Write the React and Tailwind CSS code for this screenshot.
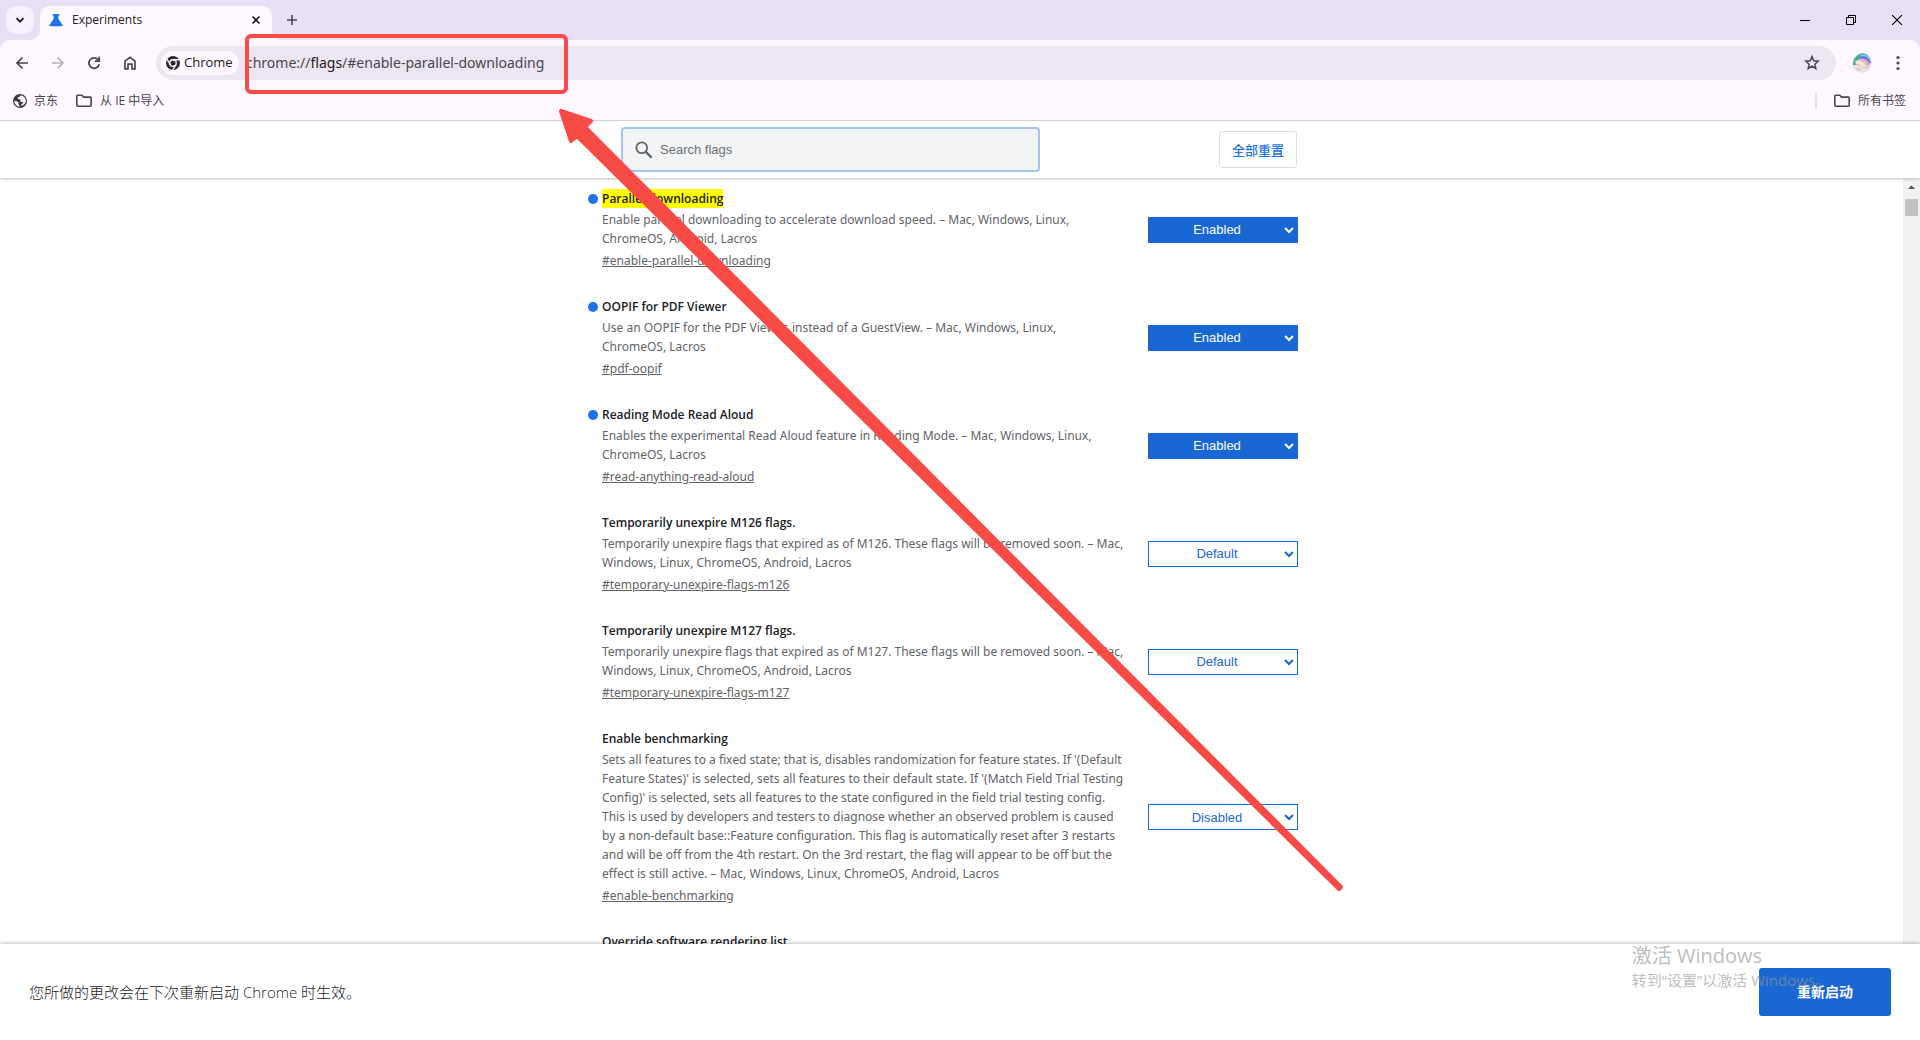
import React from "react";

const flags = [
  {
    title: "Parallel downloading",
    id: "enable-parallel-downloading",
    lines: ["Enable parallel downloading to accelerate download speed. – Mac, Windows, Linux,", "ChromeOS, Android, Lacros"],
    value: "Enabled",
    changed: true,
    marked: true,
  },
  {
    title: "OOPIF for PDF Viewer",
    id: "pdf-oopif",
    lines: ["Use an OOPIF for the PDF Viewer, instead of a GuestView. – Mac, Windows, Linux,", "ChromeOS, Lacros"],
    value: "Enabled",
    changed: true,
  },
  {
    title: "Reading Mode Read Aloud",
    id: "read-anything-read-aloud",
    lines: ["Enables the experimental Read Aloud feature in Reading Mode. – Mac, Windows, Linux,", "ChromeOS, Lacros"],
    value: "Enabled",
    changed: true,
  },
  {
    title: "Temporarily unexpire M126 flags.",
    id: "temporary-unexpire-flags-m126",
    lines: ["Temporarily unexpire flags that expired as of M126. These flags will be removed soon. – Mac,", "Windows, Linux, ChromeOS, Android, Lacros"],
    value: "Default",
  },
  {
    title: "Temporarily unexpire M127 flags.",
    id: "temporary-unexpire-flags-m127",
    lines: ["Temporarily unexpire flags that expired as of M127. These flags will be removed soon. – Mac,", "Windows, Linux, ChromeOS, Android, Lacros"],
    value: "Default",
  },
  {
    title: "Enable benchmarking",
    id: "enable-benchmarking",
    lines: [
      "Sets all features to a fixed state; that is, disables randomization for feature states. If '(Default",
      "Feature States)' is selected, sets all features to their default state. If '(Match Field Trial Testing",
      "Config)' is selected, sets all features to the state configured in the field trial testing config.",
      "This is used by developers and testers to diagnose whether an observed problem is caused",
      "by a non-default base::Feature configuration. This flag is automatically reset after 3 restarts",
      "and will be off from the 4th restart. On the 3rd restart, the flag will appear to be off but the",
      "effect is still active. – Mac, Windows, Linux, ChromeOS, Android, Lacros",
    ],
    value: "Disabled",
  },
];

const nextFlag = "Override software rendering list";

function Svg({ size = 20, box = 20, className = "", children }) {
  return (
    <svg width={size} height={size} viewBox={`0 0 ${box} ${box}`} className={`shrink-0 ${className}`} fill="none" stroke="currentColor" strokeWidth="2" aria-hidden="true">
      {children}
    </svg>
  );
}

function FolderIcon() {
  return (
    <Svg size={18} box={18} className="text-[#49454e]">
      <path d="M1.8 4.2a1 1 0 0 1 1-1h4l1.8 1.9h6.6a1 1 0 0 1 1 1v7.2a1 1 0 0 1-1 1H2.8a1 1 0 0 1-1-1z" strokeWidth="1.6" />
    </Svg>
  );
}

function IconButton({ label, className = "", children }) {
  return (
    <button type="button" aria-label={label} className={`flex h-9 w-9 items-center justify-center ${className}`}>
      {children}
    </button>
  );
}

function TabStrip() {
  return (
    <div className="flex h-10 bg-[#e8def5] pl-1.5">
      <button type="button" aria-label="Search tabs" className="mt-1.5 flex h-7 w-7 items-center justify-center rounded-[10px] bg-[#f7f0fd] text-[#1d1b20]">
        <Svg size={10} box={10}><path d="M1.5 3.2 5 6.7l3.5-3.5" strokeWidth="1.8" /></Svg>
      </button>
      <div className="relative ml-1.5 mt-1.5 flex w-[232px] items-center rounded-t-[10px] bg-[#fef7ff] pb-1.5 pl-2 pr-2">
        <svg className="absolute -left-2.5 bottom-0" width="10" height="10" aria-hidden="true"><path d="M10 0v10H0A10 10 0 0 0 10 0z" fill="#fef7ff" /></svg>
        <svg className="absolute -right-2.5 bottom-0" width="10" height="10" aria-hidden="true"><path d="M0 0v10h10A10 10 0 0 1 0 0z" fill="#fef7ff" /></svg>
        <svg width="16" height="16" viewBox="0 0 16 16" fill="#1a73e8" aria-hidden="true">
          <path d="M4.6 2h6.8v1.6h-1V7l4 5.8c.5.8 0 1.4-.8 1.4H2.400c-.8 0-1.300-.6-.8-1.400L5.600 7V3.600h-1z" />
        </svg>
        <span className="ml-2 flex-1 text-xs leading-4 text-[#1d1b20]">Experiments</span>
        <button type="button" aria-label="Close tab" className="flex h-4 w-4 items-center justify-center text-[#1d1b20]">
          <Svg size={10} box={10}><path d="m1.500 1.500 7 7m0-7-7 7" strokeWidth="1.600" /></Svg>
        </button>
      </div>
      <button type="button" aria-label="New tab" className="ml-1.5 mt-1.5 flex h-7 w-7 items-center justify-center text-[#49454e]">
        <Svg size={12} box={12}><path d="M6 1v10M1 6h10" strokeWidth="1.600" /></Svg>
      </button>
      <div className="ml-auto flex text-black">
        <button type="button" aria-label="Minimize" className="flex w-[46px] items-center justify-center"><Svg size={10} box={10}><path d="M0 5.500h10" strokeWidth="1" /></Svg></button>
        <button type="button" aria-label="Restore" className="flex w-[46px] items-center justify-center"><Svg size={10} box={10}><path d="M.5 2.500h7v7h-7zM2.500 2V.500h7v7H8" strokeWidth="1" /></Svg></button>
        <button type="button" aria-label="Close" className="flex w-[46px] items-center justify-center"><Svg size={10} box={10}><path d="m0 0 10 10M10 0 0 10" strokeWidth="1.200" /></Svg></button>
      </div>
    </div>
  );
}

function Toolbar() {
  return (
    <div className="bg-[#e8def5]">
      <div className="flex h-[46px] items-center rounded-t-[10px] bg-[#fef7ff] pl-1 pr-1">
        <div className="flex text-[#49454e]">
          <IconButton label="Back"><Svg><path d="M16 10H5m5.500-5.500L5 10l5.500 5.500" strokeWidth="1.700" /></Svg></IconButton>
          <IconButton label="Forward" className="text-[#b5b0b9]"><Svg><path d="M4 10h11M9.500 4.500 15 10l-5.500 5.500" strokeWidth="1.700" /></Svg></IconButton>
          <IconButton label="Reload"><Svg><path d="M14.300 7A5.200 5.200 0 1 0 15.200 11.200" strokeWidth="1.800" /><path d="M15.200 3.800v4.400h-4.400" strokeWidth="1.800" /></Svg></IconButton>
          <IconButton label="Home"><Svg><path d="M5 8.200 10 4.300l5 3.900v7.600h-3v-4.600H8v4.600H5z" strokeWidth="1.700" /></Svg></IconButton>
        </div>
        <div className="ml-2 flex h-[34px] flex-1 items-center rounded-full bg-[#ece6f0] pl-[5px]">
          <button type="button" className="flex h-6 w-[78px] items-center gap-1 rounded-full bg-[#fef7ff] pl-[5px] text-[13px] text-[#1d1b20]">
            <svg width="14" height="14" viewBox="0 0 16 16" className="shrink-0" aria-hidden="true">
              <circle cx="8" cy="8" r="8" fill="#2d2a31" />
              <circle cx="8" cy="8" r="3.700" fill="none" stroke="#fef7ff" strokeWidth="1.500" />
              <path d="M8 4.300h7.200M4.800 9.900 1.200 3.700M11.200 9.900 7.600 16" stroke="#fef7ff" strokeWidth="1.500" />
            </svg>
            Chrome
          </button>
          <div className="ml-[7px] flex-1 font-['Noto_Sans',sans-serif] text-sm text-[#49454e]">
            chrome://<span className="text-[#1d1b20]">flags</span>/#enable-parallel-downloading
          </div>
          <button type="button" aria-label="Bookmark this tab" className="mr-3.5 text-[#49454e]">
            <Svg><path d="m10 3.600 1.700 4.200 4.500.4-3.400 3 1 4.400L10 13.200l-3.800 2.400 1-4.400-3.400-3 4.500-.4z" strokeWidth="1.500" /></Svg>
          </button>
        </div>
        <button type="button" aria-label="Profile" className="ml-4 mr-2">
          <svg width="20" height="20" viewBox="0 0 20 20" className="rounded-full" aria-hidden="true">
            <circle cx="10" cy="10" r="10" fill="#e3e2e4" />
            <path d="M1 12C1 6 5 1 10 0c3 0 5 1 7 3-4-1-8 0-10 3-2 2-3 4-3 6z" fill="#35b58f" />
            <path d="M8 2c5-2 9 0 11 5l-2 1C15 5 11 4 8 4z" fill="#7fc4e8" />
            <path d="M7 4c5-2 10 0 12 6l-3 1C14 7 11 5 7 6z" fill="#6a70e0" />
            <path d="M9 6c4-1 8 2 9 6l-3 1c-1-4-3-5-6-5z" fill="#e6a9c8" />
            <path d="m3 8 3-1 4 1 4 4 2 1-1 2-3-1-5 3-2-1 3-3-2-2-2 1z" fill="#f3e7d8" stroke="#a89c97" strokeWidth=".5" />
          </svg>
        </button>
        <IconButton label="Menu" className="text-[#49454e]">
          <svg width="20" height="20" viewBox="0 0 20 20" fill="currentColor" aria-hidden="true"><circle cx="10" cy="4.500" r="1.600" /><circle cx="10" cy="10" r="1.600" /><circle cx="10" cy="15.500" r="1.600" /></svg>
        </IconButton>
      </div>
    </div>
  );
}

function BookmarksBar() {
  return (
    <div className="flex h-[35px] items-start border-b border-[#e0d9e6] bg-[#fef7ff] pl-[13px] pr-3.5 text-xs text-[#49454e]">
      <div className="flex h-[30px] flex-1 items-center">
        <a href="#jd" className="flex items-center gap-[7px]">
          <svg width="14" height="14" viewBox="0 0 16 16" aria-hidden="true">
            <circle cx="8" cy="8" r="8" fill="#3d3a41" />
            <path d="M8.500 1.600c-.3 1.300-1.500 1.500-2.600 2C4.700 4.200 5.500 5.700 7 5.900c1.500.3 2.200 1.100 1.500 2.300-.5.9.7 1 1.600.8 1.500-.3 2 .8 1 1.700-1 1-1.700 1.200-1.900 2.600 3-.2 5.300-2.300 5.500-5.500.1-3.100-2.600-6.200-6.200-6.200zM1.600 7.300C2.800 8.400 4.700 8 5.700 9.100c.9 1 .2 1.700.7 2.700.4.900 1 .9 1 2.500C4 14.200 1.400 11.300 1.600 7.300z" fill="#fef7ff" />
          </svg>
          京东
        </a>
        <a href="#imported" className="ml-[17px] flex items-center gap-[7px]">
          <FolderIcon />
          从 IE 中导入
        </a>
      </div>
      <div className="flex h-[30px] items-center">
        <span className="mr-4 h-4 w-0.5 bg-[#e8def8]" />
        <button type="button" className="flex items-center gap-[7px]">
          <FolderIcon />
          所有书签
        </button>
      </div>
    </div>
  );
}

function SearchHeader() {
  return (
    <header className="relative z-10 h-[57px] bg-white pr-[17px] shadow-[0_1px_3px_rgba(0,0,0,0.25)]">
      <div className="mx-auto flex h-full w-[727px] items-center pl-[33px] pr-[18px]">
        <label className="flex h-[45px] w-[419px] items-center rounded-[4px] border-2 border-[#a0c3fb] bg-[#f1f3f4] pl-3">
          <Svg size={18} box={20} className="text-[#5f6368]">
            <circle cx="7.500" cy="7.500" r="6" />
            <path d="m11.800 11.800 6.800 6.800" strokeWidth="2.600" />
          </Svg>
          <input type="text" aria-label="Search flags" placeholder="Search flags" className="ml-[7px] flex-1 bg-transparent font-['Liberation_Sans',sans-serif] text-[13px] outline-none placeholder:text-[#6b6f73]" />
        </label>
        <button type="button" className="ml-auto h-[37px] w-[78px] rounded-[3px] border border-[#dadce0] font-['Noto_Sans_CJK_SC',sans-serif] text-[13px] font-medium text-[#1a73e8]">全部重置</button>
      </div>
    </header>
  );
}

function FlagTitle({ changed, marked, children }) {
  return (
    <h3 className="flex items-center text-xs font-semibold leading-[19px] text-[#202124]">
      <span className={changed ? "mr-1 h-2.5 w-2.5 rounded-full bg-[#1a73e8]" : "mr-1 h-2.5 w-2.5"} />
      <span className={marked ? "bg-[#ffff00]" : ""}>{children}</span>
    </h3>
  );
}

function FlagRow({ flag }) {
  const enabled = flag.value === "Enabled";
  return (
    <li className="mb-[27px] flex items-center">
      <div className="w-[560px] shrink-0">
        <FlagTitle changed={flag.changed} marked={flag.marked}>{flag.title}</FlagTitle>
        <p className="mt-0.5 whitespace-nowrap pl-3.5 font-['Noto_Sans',sans-serif] text-xs leading-[19px] text-[#5f6368]">
          {flag.lines.map((line) => (
            <React.Fragment key={line}>{line}<br /></React.Fragment>
          ))}
        </p>
        <a href={`#${flag.id}`} className="ml-3.5 mt-[3px] block w-fit font-['Noto_Sans',sans-serif] text-xs leading-[19px] text-[#5f6368] underline">#{flag.id}</a>
      </div>
      <select
        aria-label={flag.title}
        defaultValue={flag.value}
        className={
          enabled
            ? "h-[26px] w-[150px] border border-[#1967d2] bg-[#1967d2] text-center font-['Liberation_Sans',sans-serif] text-[13px] text-white"
            : "h-[26px] w-[150px] border border-[#1967d2] bg-white text-center font-['Liberation_Sans',sans-serif] text-[13px] text-[#1967d2]"
        }
      >
        <option>Default</option>
        <option>Enabled</option>
        <option>Disabled</option>
      </select>
    </li>
  );
}

function Scrollbar() {
  return (
    <div className="flex w-[17px] shrink-0 flex-col items-center bg-[#f1f1f1]" aria-hidden="true">
      <svg width="17" height="21" viewBox="0 0 17 21"><path d="M5 11h7L8.500 7.500z" fill="#505050" /></svg>
      <div className="h-[17px] w-[13px] bg-[#c1c1c1]" />
    </div>
  );
}

function RestartBar() {
  return (
    <footer className="relative z-10 flex h-24 items-center justify-between bg-white pl-[29px] pr-[29px] shadow-[0_-1px_3px_rgba(0,0,0,0.25)]">
      <p className="font-['Open_Sans','Noto_Sans_CJK_SC',sans-serif] text-[15px] font-light text-[#202124]">您所做的更改会在下次重新启动 Chrome 时生效。</p>
      <button type="button" className="h-12 w-[132px] rounded-[3px] bg-[#1967d2] text-sm font-bold text-white">重新启动</button>
      <div className="pointer-events-none absolute right-[90px] top-0 text-[#969696]/65">
        <div className="text-xl leading-6">激活 Windows</div>
        <div className="text-[15px] leading-6">转到“设置”以激活 Windows。</div>
      </div>
    </footer>
  );
}

function Annotations() {
  return (
    <div className="pointer-events-none absolute inset-0 z-20" aria-hidden="true">
      <div className="absolute left-[245px] top-[34px] h-[60px] w-[323px] rounded-[6px] border-4 border-[#f84b46]" />
      <svg className="absolute left-[555px] top-[105px]" width="800" height="800" viewBox="555 105 800 800">
        <path d="M561 111 591 121 585 127 1341 887 1339 889 577 136 571 141z" fill="#f84b46" stroke="#f84b46" strokeWidth="4" strokeLinejoin="round" />
      </svg>
    </div>
  );
}

export default function App() {
  return (
    <div className="relative flex h-screen flex-col overflow-hidden bg-white font-['Open_Sans','Noto_Sans_CJK_SC',sans-serif]">
      <TabStrip />
      <Toolbar />
      <BookmarksBar />
      <SearchHeader />
      <main className="flex min-h-0 flex-1">
        <div className="flex-1 overflow-hidden">
          <ul className="mx-auto w-[727px] pt-[11px]">
            {flags.map((flag) => (
              <FlagRow key={flag.id} flag={flag} />
            ))}
            <li><FlagTitle>{nextFlag}</FlagTitle></li>
          </ul>
        </div>
        <Scrollbar />
      </main>
      <RestartBar />
      <Annotations />
    </div>
  );
}
